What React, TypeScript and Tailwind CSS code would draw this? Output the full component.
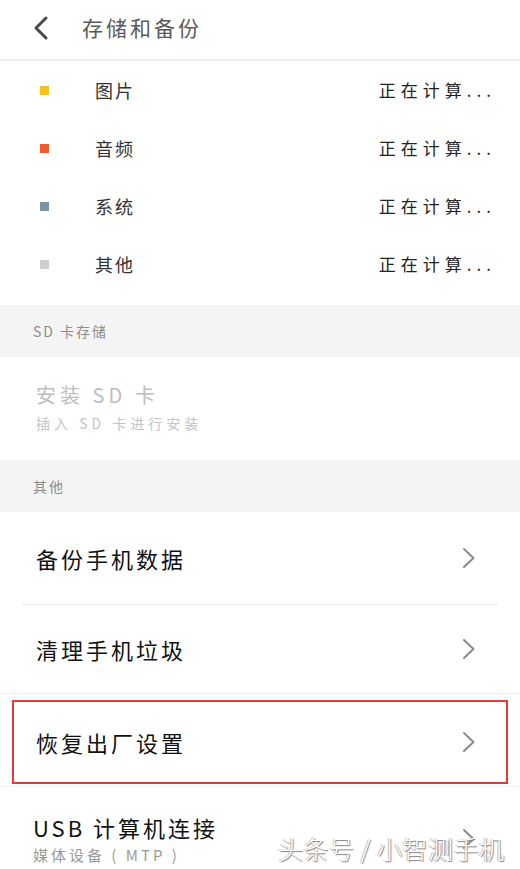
import React from 'react';

const Chevron: React.FC = () => (
  <svg width="14" height="22" viewBox="0 0 14 22" fill="none" className="shrink-0">
    <path d="M2 2 L11.5 11 L2 20" stroke="#8a8a8a" strokeWidth="2" strokeLinecap="round" strokeLinejoin="round" />
  </svg>
);

const usage = [
  { name: '图片', color: 'bg-[#f6c21b]' },
  { name: '音频', color: 'bg-[#ef5a2a]' },
  { name: '系统', color: 'bg-[#7b93a6]' },
  { name: '其他', color: 'bg-[#cfcfcf]' },
];

const SectionHeader: React.FC<{ title: string }> = ({ title }) => (
  <div className="h-[52px] bg-[#f4f4f4] flex items-center pl-[33px] text-[14px] tracking-[2px] text-[#8c8c8c]">
    {title}
  </div>
);

const App: React.FC = () => {
  return (
    <div className="relative w-[520px] h-[869px] overflow-hidden bg-white font-['Noto_Sans_CJK_SC',sans-serif]">
      {/* top bar */}
      <div className="h-[61px] flex items-center border-b-2 border-[#eeeeee] pb-[3px]">
        <div className="w-[82px] flex items-center pl-[32px]">
          <svg width="18" height="26" viewBox="0 0 18 26" fill="none">
            <path d="M14 3 L4 13 L14 23" stroke="#4a4a4a" strokeWidth="3" strokeLinecap="round" strokeLinejoin="round" />
          </svg>
        </div>
        <h1 className="text-[21px] tracking-[3px] text-[#5a5a5a] font-normal">存储和备份</h1>
      </div>

      {/* usage list */}
      <div className="pb-[12px]">
        {usage.map((u) => (
          <div key={u.name} className="h-[58px] flex items-center">
            <span className={`w-[9px] h-[9px] ml-[40px] ${u.color}`} />
            <span className="ml-[46px] text-[18px] tracking-[2px] text-[#333333]">{u.name}</span>
            <span className="ml-auto mr-[24px] text-[17px] tracking-[5px] text-[#222222]">正在计算...</span>
          </div>
        ))}
      </div>

      <SectionHeader title="SD 卡存储" />

      <div className="h-[103px] flex flex-col justify-center pl-[36px] pb-[2px]">
        <div className="text-[20px] tracking-[4px] text-[#bdbdbd] leading-[28px]">安装 SD 卡</div>
        <div className="text-[14px] tracking-[4px] text-[#c4c4c4] leading-[22px] mt-[3px]">插入 SD 卡进行安装</div>
      </div>

      <SectionHeader title="其他" />

      {/* action rows */}
      <div className="h-[92px] flex items-center pl-[36px] pr-[44px]">
        <span className="text-[22px] tracking-[3px] text-[#111111]">备份手机数据</span>
        <span className="ml-auto"><Chevron /></span>
      </div>
      <div className="mx-[22px] h-[1px] bg-[#e6e6e6]" />
      <div className="h-[88px] flex items-center pl-[36px] pr-[44px]">
        <span className="text-[22px] tracking-[3px] text-[#111111]">清理手机垃圾</span>
        <span className="ml-auto"><Chevron /></span>
      </div>
      <div className="h-[1px] bg-[#eeeeee]" />

      <div className="pt-[6px] pb-[2px] px-[12px]">
        <div className="h-[84px] border-2 border-[#e03b3b] flex items-center pl-[22px] pr-[30px]">
          <span className="text-[22px] tracking-[3px] text-[#111111]">恢复出厂设置</span>
          <span className="ml-auto"><Chevron /></span>
        </div>
      </div>
      <div className="h-[1px] bg-[#f0f0f0]" />

      <div className="h-[104px] flex items-center pl-[33px] pr-[44px]">
        <div className="flex flex-col">
          <span className="text-[22px] tracking-[3px] text-[#111111] leading-[30px]">USB 计算机连接</span>
          <span className="text-[15px] tracking-[3px] text-[#9a9a9a] leading-[22px] mt-[2px]">媒体设备 ( MTP )</span>
        </div>
        <span className="ml-auto"><Chevron /></span>
      </div>

      {/* watermark */}
      <div className="absolute left-[278px] top-[832px] text-[25px] leading-[32px] font-light tracking-[0.5px] text-white [text-shadow:1px_1px_1px_#7a7a7a,-1px_0_0_#bbbbbb]">
        头条号 / 小智测手机
      </div>
    </div>
  );
};

export default App;
